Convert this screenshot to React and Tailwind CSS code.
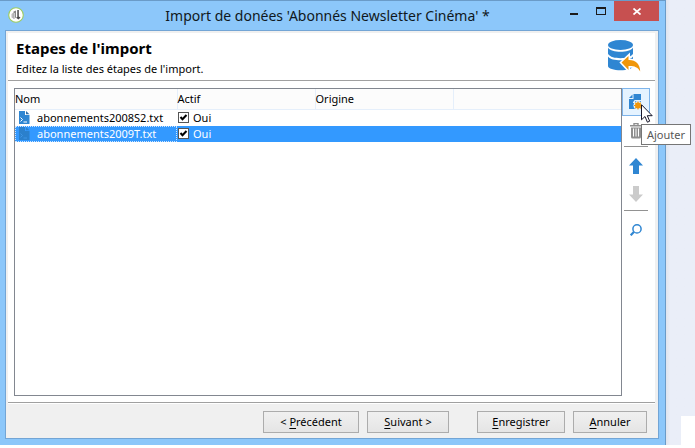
import React from "react";

const files = [
  { name: "abonnements2008S2.txt", selected: false },
  { name: "abonnements2009T.txt", selected: true },
];

function AppLogo() {
  return (
    <svg className="size-4" viewBox="0 0 16 16" aria-hidden="true">
      <circle cx="8" cy="8" r="7.3" fill="#fff" stroke="#9ccb5f" strokeWidth="1.1" />
      <path d="M3.500 7 5.500 5.500v6L3.500 10.500z" fill="#bbb" />
      <path d="M5.500 4.500 8 3.500v7l-2.500 1.500z" fill="#888" />
      <path d="M6.500 6v5" stroke="#ddd" strokeWidth="0.800" />
      <path d="M9.300 3h1.500v6.500l1.700 1L10.500 12.500 8 10.800l1.300-.8z" fill="#4a4a4a" />
    </svg>
  );
}

function DatabaseIcon() {
  return (
    <svg className="h-8 w-[33px]" viewBox="0 0 33 32" aria-hidden="true">
      <g fill="#2f86d2">
        <ellipse cx="12.5" cy="5" rx="12.5" ry="5" />
        <path d="M0 7.500c2 3.400 7 4.200 12.500 4.200S23 10.900 25 7.500v6.300c-2 3.400-7 4.400-12.500 4.400S2 17.200 0 13.800z" />
        <path d="M0 16.500c2 3 7 3.700 12.500 3.700S23 19.500 25 16.500V26c0 2.500-6 4.300-12.500 4.300S0 28.500 0 26z" />
      </g>
      <path
        d="M13.500 22.600 20.500 16v4c7-.3 11.700 4 11.700 11.500-2.600-4.500-6.200-5.600-11.700-5.400v4z"
        fill="#f09609"
        stroke="#fff"
        strokeWidth="3"
        paintOrder="stroke"
      />
    </svg>
  );
}

function FileIcon({ selected }) {
  return (
    <svg className="h-[13px] w-[11px] shrink-0" viewBox="0 0 11 13" aria-hidden="true">
      <path d="M0 0h6v4h4.500v9H0z" fill={selected ? "#2b80cc" : "#2f86d2"} />
      <path d="M7 0l3.500 3.200H7z" fill={selected ? "#2b80cc" : "#2f6fa8"} />
      <path
        d="M1.500 6.500 3.500 8.500 1.500 10.500M4.500 11h3.500"
        fill="none"
        stroke={selected ? "#3f95e6" : "#fff"}
        strokeWidth="1"
      />
    </svg>
  );
}

function AddIcon() {
  return (
    <svg className="h-4 w-[15px]" viewBox="0 0 15 16" aria-hidden="true">
      <path d="M4.500 0H12v9H6.500L5 7.500H0V5h4.500z" fill="#2f86d2" />
      <path d="M3.500.500v3.500H0z" fill="#2f86d2" />
      <path d="M0 7h4v2h3v6H0z" fill="#2f86d2" />
      <path d="M5.500 8.500V6.500H12" fill="none" stroke="#e5f3ff" strokeWidth="1" />
      <circle cx="9" cy="11.500" r="4.600" fill="#e5f3ff" />
      <circle cx="9" cy="11.500" r="3" fill="#f09609" />
      <path
        d="M9 7.500v8M5 11.500h8M6.200 8.700l5.600 5.600M11.800 8.700l-5.600 5.600"
        stroke="#f09609"
        strokeWidth="1.100"
      />
    </svg>
  );
}

function TrashIcon() {
  return (
    <svg className="h-4 w-3" viewBox="0 0 12 16" aria-hidden="true">
      <path d="M4 2V.500h4V2M0 2.700h12" fill="none" stroke="#8f8f8f" strokeWidth="1.400" />
      <path d="M1 4.500h10V14q0 1.500-1.500 1.500h-7Q1 15.500 1 14z" fill="#8f8f8f" />
      <path d="M3.500 5.500v8M6 5.500v8M8.500 5.500v8" stroke="#fff" strokeWidth="1" />
    </svg>
  );
}

function ArrowIcon({ down }) {
  return (
    <svg className="h-4 w-3.5" viewBox="0 0 14 16" aria-hidden="true">
      {down ? (
        <path d="M4 0h6v8.500h4L7 16 0 8.500h4z" fill="#cbcbcb" />
      ) : (
        <path d="M7 0l7 7.500h-4V16H4V7.500H0z" fill="#2f86d2" />
      )}
    </svg>
  );
}

function SearchIcon() {
  return (
    <svg className="h-3 w-3" viewBox="0 0 12 12" aria-hidden="true">
      <circle cx="7" cy="4.900" r="4.100" fill="none" stroke="#2f86d2" strokeWidth="1.500" />
      <path d="M3.800 8 .7 11.300" stroke="#2f86d2" strokeWidth="2.200" />
    </svg>
  );
}

function WizardButton({ before = "", letter, after, className }) {
  return (
    <button
      type="button"
      className={`h-[22px] border border-[#acacac] bg-linear-to-b from-[#f0f0f0] to-[#e5e5e5] leading-4 text-black ${className}`}
    >
      {before}
      <span className="underline underline-offset-2">{letter}</span>
      {after}
    </button>
  );
}

export default function App() {
  return (
    <div className="flex font-['Noto_Sans',sans-serif] text-[11px] leading-4 text-black">
      <div className="flex min-w-0 flex-1 flex-col border-t border-r border-[#6a9bc8] bg-[#8cc7fa] pr-[6px] pb-[6px] pl-[5px]">
        <header className="flex h-[29px] items-start">
          <div className="flex w-[90px] pt-[6px] pl-[3px]">
            <AppLogo />
          </div>
          <h1 className="flex-1 pt-1 text-center text-[14px] leading-[22px] text-[#101820]">
            Import de donées 'Abonnés Newsletter Cinéma' *
          </h1>
          <div className="flex">
            <button type="button" aria-label="Réduire" className="flex h-5 w-[27px] items-center justify-center">
              <svg className="h-3 w-2" viewBox="0 0 8 12"><path d="M0 8h8v2H0z" fill="#1b1b1b" /></svg>
            </button>
            <button type="button" aria-label="Agrandir" className="flex h-5 w-[27px] items-center justify-center">
              <svg className="h-2 w-2.5" viewBox="0 0 10 8"><path d="M0 0h10v8H0zM1 2v5h8V2z" fillRule="evenodd" fill="#1b1b1b" /></svg>
            </button>
            <button type="button" aria-label="Fermer" className="flex h-5 w-[45px] items-center justify-center bg-[#c75050]">
              <svg className="h-[7px] w-2" viewBox="0 0 8 7"><path d="M.5.500l7 6M7.500.500l-7 6" stroke="#fff" strokeWidth="1.700" /></svg>
            </button>
          </div>
        </header>

        <div className="border border-[#73a5d5] bg-[#f0f0f0] pt-[2px] pr-[3px] pl-[2px]">
          <section className="flex h-12 justify-between border-b border-[#a0a0a0] bg-white pr-[14px] pl-2">
            <div>
              <h2 className="pt-[5px] text-[15px] leading-5 font-bold">Etapes de l'import</h2>
              <p className="pt-[3px]">Editez la liste des étapes de l'import.</p>
            </div>
            <div className="pt-[7px]">
              <DatabaseIcon />
            </div>
          </section>

          <main className="flex border-b border-[#a0a0a0] bg-white pt-[7px] pr-[5px] pb-[6px] pl-[6px]">
            <div className="h-[308px] min-w-0 flex-1 border border-[#828790]">
              <table className="w-full table-fixed border-collapse">
                <colgroup>
                  <col className="w-[162px]" />
                  <col className="w-[138px]" />
                  <col className="w-[138px]" />
                  <col />
                </colgroup>
                <thead>
                  <tr className="h-5 border-b border-[#e5effb] bg-[#fcfcfc] text-left">
                    <th className="border-r border-[#e5effb] p-0 font-normal">Nom</th>
                    <th className="border-r border-[#e5effb] p-0 font-normal">Actif</th>
                    <th className="border-r border-[#e5effb] p-0 font-normal">Origine</th>
                    <td className="p-0" />
                  </tr>
                </thead>
                <tbody>
                  {files.map((file) => (
                    <tr key={file.name} className={file.selected ? "h-4 bg-[#3399ff] text-white" : "h-4"}>
                      <td className="p-0">
                        <div
                          className={`flex h-4 items-center gap-[7px] pl-1 leading-[14px] outline-dotted outline-1 -outline-offset-1 ${
                            file.selected ? "outline-[#cfe6ff]" : "outline-transparent"
                          }`}
                        >
                          <FileIcon selected={file.selected} />
                          <span>{file.name}</span>
                        </div>
                      </td>
                      <td className="p-0">
                        <label className="flex h-4 items-center gap-1 leading-[14px]">
                          <span className="grid pl-px">
                            <input
                              type="checkbox"
                              defaultChecked
                              className="peer col-start-1 row-start-1 size-[11px] appearance-none border border-[#555] bg-white"
                            />
                            <svg
                              className="pointer-events-none invisible col-start-1 row-start-1 size-[11px] peer-checked:visible"
                              viewBox="0 0 11 11"
                              aria-hidden="true"
                            >
                              <path d="M2.500 5 4.500 7.300 8.500 3" fill="none" stroke="#000" strokeWidth="2" />
                            </svg>
                          </span>
                          Oui
                        </label>
                      </td>
                      <td className="p-0" />
                      <td className="p-0" />
                    </tr>
                  ))}
                </tbody>
              </table>
            </div>

            <nav aria-label="Actions" className="flex w-7 flex-col items-center">
              <div className="relative">
                <button
                  type="button"
                  aria-label="Ajouter"
                  aria-describedby="tip"
                  className="flex h-7 w-7 items-center justify-center border border-[#7eb4ea] bg-[#e5f3ff]"
                >
                  <AddIcon />
                </button>
                <svg className="absolute top-4 left-[19px] z-20 h-[19px] w-3" viewBox="0 0 12 19" aria-hidden="true">
                  <path
                    d="M.5.700v15.100l3.500-3.300 2.400 5.700 2.300-1-2.400-5.500h4.900z"
                    fill="#fff"
                    stroke="#16162a"
                    strokeWidth="1"
                  />
                </svg>
                <div
                  id="tip"
                  role="tooltip"
                  className="absolute top-9 left-[19px] z-10 h-[21px] border border-[#767676] bg-white px-[5px] leading-[20px] text-[#575757]"
                >
                  Ajouter
                </div>
              </div>
              <button type="button" aria-label="Supprimer" className="flex h-[30px] w-7 items-center justify-center">
                <TrashIcon />
              </button>
              <hr className="w-6 border-[#929292]" />
              <button type="button" aria-label="Monter" className="mt-[5px] flex h-7 w-7 items-center justify-center">
                <ArrowIcon />
              </button>
              <button type="button" aria-label="Descendre" className="flex h-7 w-7 items-center justify-center">
                <ArrowIcon down />
              </button>
              <hr className="mt-0.5 w-6 border-[#929292]" />
              <button type="button" aria-label="Rechercher" className="mt-[5px] flex h-7 w-7 items-center justify-center">
                <SearchIcon />
              </button>
            </nav>
          </main>

          <footer className="flex h-[35px] justify-end border-t border-white pt-[7px] pr-2">
            <WizardButton before="< " letter="P" after="récédent" className="w-24" />
            <WizardButton letter="S" after="uivant >" className="ml-2 w-[82px]" />
            <WizardButton letter="E" after="nregistrer" className="ml-7 w-[88px]" />
            <WizardButton letter="A" after="nnuler" className="ml-2 w-[74px]" />
          </footer>
        </div>
      </div>

      <aside className="flex w-[29px] flex-col items-end justify-end bg-linear-to-r from-[#dfe4ee] to-[#eaeef8] to-15%">
        <div className="h-[29px] w-3.5 bg-white" />
      </aside>
    </div>
  );
}
